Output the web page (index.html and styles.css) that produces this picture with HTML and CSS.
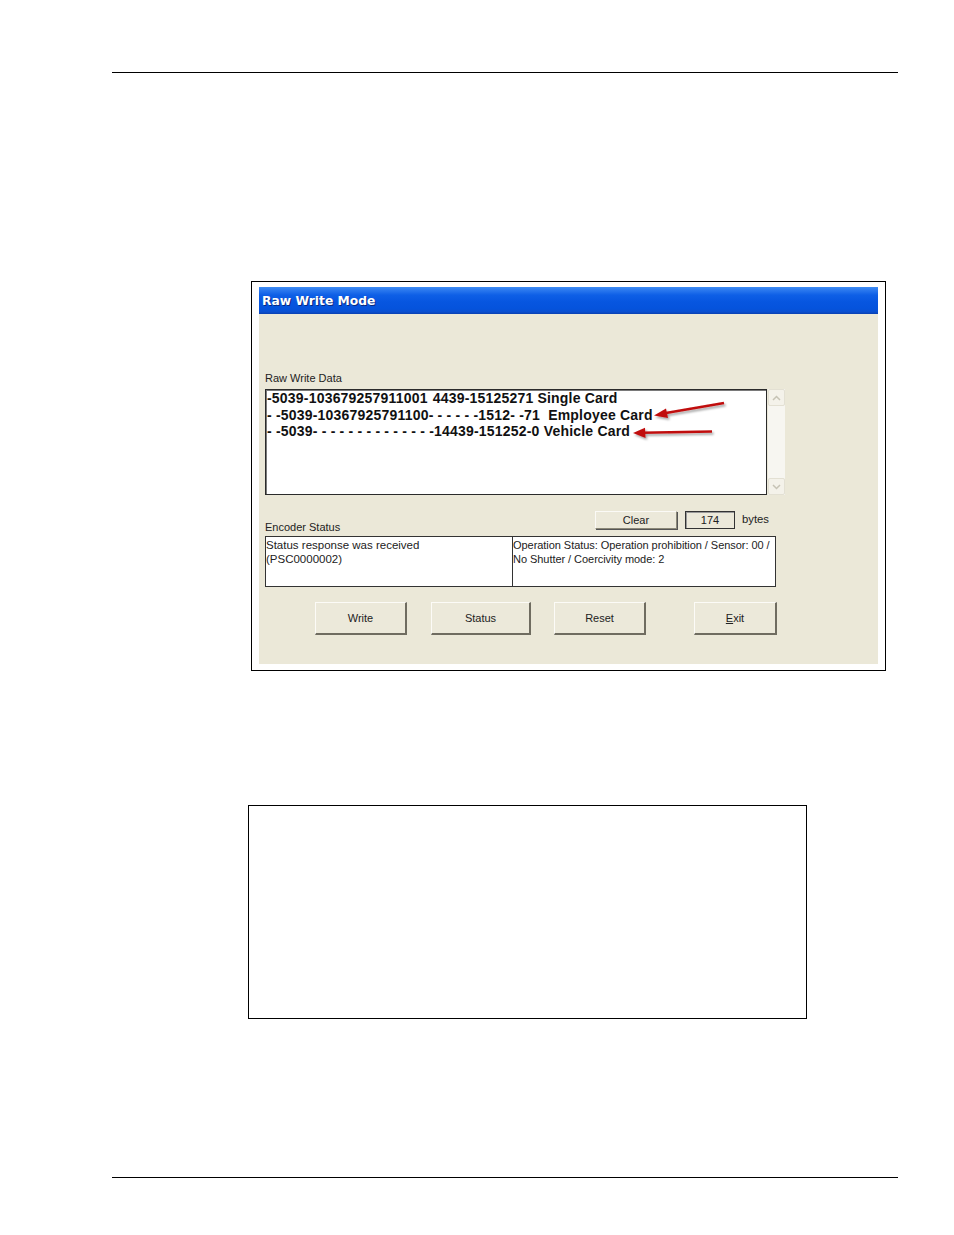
FILE: index.html
```html
<!DOCTYPE html>
<html>
<head>
<meta charset="utf-8">
<title>Raw Write Mode</title>
<link rel="stylesheet" href="styles.css">
</head>
<body>
<div class="rule rule-top"></div>

<div class="shot">
  <div class="window">
    <div class="titlebar">Raw Write Mode</div>
    <div class="winbody">
      <div class="label label-data">Raw Write Data</div>
      <div class="datarow">
        <div class="datafield">
          <div class="line">-5039-103679257911001<span class="kern">4439-15125271 Single Card</span></div>
          <div class="line">- -5039-10367925791100- - - - - -1512- -71  Employee Card</div>
          <div class="line">- -5039- - - - - - - - - - - - - -14439-151252-0 Vehicle Card</div>
          <svg class="arrows" width="502" height="106" viewBox="0 0 502 106">
            <defs>
              <filter id="sh" x="-20%" y="-50%" width="140%" height="200%">
                <feDropShadow dx="1.5" dy="2" stdDeviation="1.2" flood-color="#000" flood-opacity="0.35"/>
              </filter>
            </defs>
            <g filter="url(#sh)" fill="#c00d0d" stroke="#c00d0d">
              <line x1="459" y1="14" x2="398" y2="24.5" stroke-width="2.4"/>
              <polygon points="389,26.5 401,19.5 403,29" stroke="none"/>
              <line x1="447" y1="42.5" x2="377" y2="43.8" stroke-width="2.4"/>
              <polygon points="368,44 380,38.8 380.5,49" stroke="none"/>
            </g>
          </svg>
        </div>
        <div class="scrollbar">
          <div class="sbtn">
            <svg width="9" height="6" viewBox="0 0 9 6"><path d="M1 5 L4.5 1.5 L8 5" fill="none" stroke="#c6c3b5" stroke-width="1.5"/></svg>
          </div>
          <div class="strack"></div>
          <div class="sbtn">
            <svg width="9" height="6" viewBox="0 0 9 6"><path d="M1 1 L4.5 4.5 L8 1" fill="none" stroke="#c6c3b5" stroke-width="1.5"/></svg>
          </div>
        </div>
      </div>

      <div class="statusrow">
        <div class="label label-enc">Encoder Status</div>
        <div class="btn btn-clear">Clear</div>
        <div class="countbox">174</div>
        <div class="bytes">bytes</div>
      </div>

      <div class="statusbox">
        <div class="cell cell-left">Status response was received<br>(PSC0000002)</div>
        <div class="cell cell-right">Operation Status: Operation prohibition / Sensor: 00 /<br>No Shutter / Coercivity mode: 2</div>
      </div>

      <div class="buttonrow">
        <div class="btn btn-big btn-write">Write</div>
        <div class="btn btn-big btn-status">Status</div>
        <div class="btn btn-big btn-reset">Reset</div>
        <div class="btn btn-big btn-exit"><u>E</u>xit</div>
      </div>
    </div>
  </div>
</div>

<div class="emptybox"></div>

<div class="rule rule-bottom"></div>
</body>
</html>
```

FILE: styles.css
```css
* { box-sizing: border-box; }

html, body {
  margin: 0;
  padding: 0;
  background: #ffffff;
}

body {
  font-family: "Liberation Sans", Arial, sans-serif;
  color: #000;
  width: 954px;
  height: 1235px;
  overflow: hidden;
}

.rule {
  height: 1px;
  background: #000;
  margin-left: 112px;
  width: 786px;
}

.rule-top { margin-top: 72px; }

.shot {
  margin-top: 208px;
  margin-left: 251px;
  width: 635px;
  height: 390px;
  border: 1px solid #000;
  padding: 5px 7px 6px 7px;
  background: #fff;
}

.window {
  width: 619px;
  height: 377px;
  display: flex;
  flex-direction: column;
}

.titlebar {
  height: 27px;
  flex: none;
  background: linear-gradient(to bottom,
    #3f8cf3 0%, #2a78ee 12%, #0e5fe6 30%, #0756e0 55%,
    #0553dc 80%, #0a4fd0 92%, #0a3fb0 100%);
  color: #fff;
  font-family: "DejaVu Sans", Verdana, sans-serif;
  font-weight: bold;
  font-size: 12.3px;
  line-height: 28px;
  padding-left: 3px;
  text-shadow: 1px 1px 0 #0a2a80;
}

.winbody {
  flex: 1;
  background: #ebe8d8;
  padding: 0 6px;
  font-size: 11px;
  color: #222;
}

.label {
  font-size: 11px;
  line-height: 13px;
  color: #222;
}

.label-data { margin-top: 58px; }

.datarow {
  margin-top: 4px;
  display: flex;
  gap: 1px;
  height: 106px;
}

.datafield {
  position: relative;
  width: 502px;
  height: 106px;
  background: #fff;
  border: 1px solid #2b2b2b;
  box-shadow: inset 1px 1px 0 #7a7a7a;
  padding: 0 0 0 1px;
  font-weight: bold;
  font-size: 14px;
  letter-spacing: 0.2px;
  color: #111;
}

.line {
  line-height: 16.7px;
  white-space: pre;
}

.kern { margin-left: 5px; }

.arrows {
  position: absolute;
  left: -1px;
  top: -1px;
}

.scrollbar {
  width: 17px;
  height: 106px;
  display: flex;
  flex-direction: column;
  background: #f5f4ef;
}

.sbtn {
  width: 17px;
  height: 17px;
  flex: none;
  border: 1px solid #e3e0d3;
  border-radius: 2px;
  background: #f4f2ea;
  display: flex;
  align-items: center;
  justify-content: center;
}

.strack {
  flex: 1;
  background: #f7f6f1;
}

.statusrow {
  margin-top: 16px;
  width: 511px;
  height: 25px;
  display: flex;
  align-items: flex-start;
}

.label-enc {
  align-self: flex-end;
  padding-bottom: 2px;
  flex: 1;
}

.btn {
  display: flex;
  align-items: center;
  justify-content: center;
  background: #ece9da;
  color: #222;
  font-size: 11px;
}

.btn-clear {
  width: 82px;
  height: 18px;
  border-top: 1px solid #fbfaf6;
  border-left: 1px solid #fbfaf6;
  border-right: 1px solid #8b8878;
  border-bottom: 1px solid #8b8878;
  box-shadow: 1px 1px 0 #555;
}

.countbox {
  width: 50px;
  height: 18px;
  margin-left: 8px;
  border: 1px solid #333;
  box-shadow: inset 1px 1px 0 #999;
  background: #ece9da;
  font-size: 11px;
  line-height: 16px;
  text-align: center;
  color: #222;
}

.bytes {
  width: 34px;
  margin-left: 7px;
  font-size: 11.3px;
  line-height: 16px;
  color: #222;
}

.statusbox {
  margin-top: 0;
  width: 511px;
  height: 51px;
  display: flex;
  background: #fff;
  border: 1px solid #333;
}

.cell {
  font-size: 11.5px;
  line-height: 14px;
  padding-top: 1px;
  color: #222;
  white-space: nowrap;
  overflow: hidden;
}

.cell-left {
  width: 247px;
  border-right: 1px solid #333;
}

.cell-right {
  flex: 1;
  font-size: 11px;
  letter-spacing: -0.05px;
}

.buttonrow {
  margin-top: 15px;
  display: flex;
  height: 33px;
}

.btn-big {
  height: 33px;
  border-top: 1px solid #fcfbf7;
  border-left: 1px solid #fcfbf7;
  border-right: 2px solid #6f6c60;
  border-bottom: 2px solid #6f6c60;
  background: #ece9da;
}

.btn-write { margin-left: 50px; width: 92px; }
.btn-status { margin-left: 24px; width: 100px; }
.btn-reset { margin-left: 23px; width: 92px; }
.btn-exit { margin-left: 48px; width: 83px; }

.emptybox {
  margin-top: 134px;
  margin-left: 248px;
  width: 559px;
  height: 214px;
  border: 1px solid #000;
}

.rule-bottom { margin-top: 158px; }
```
